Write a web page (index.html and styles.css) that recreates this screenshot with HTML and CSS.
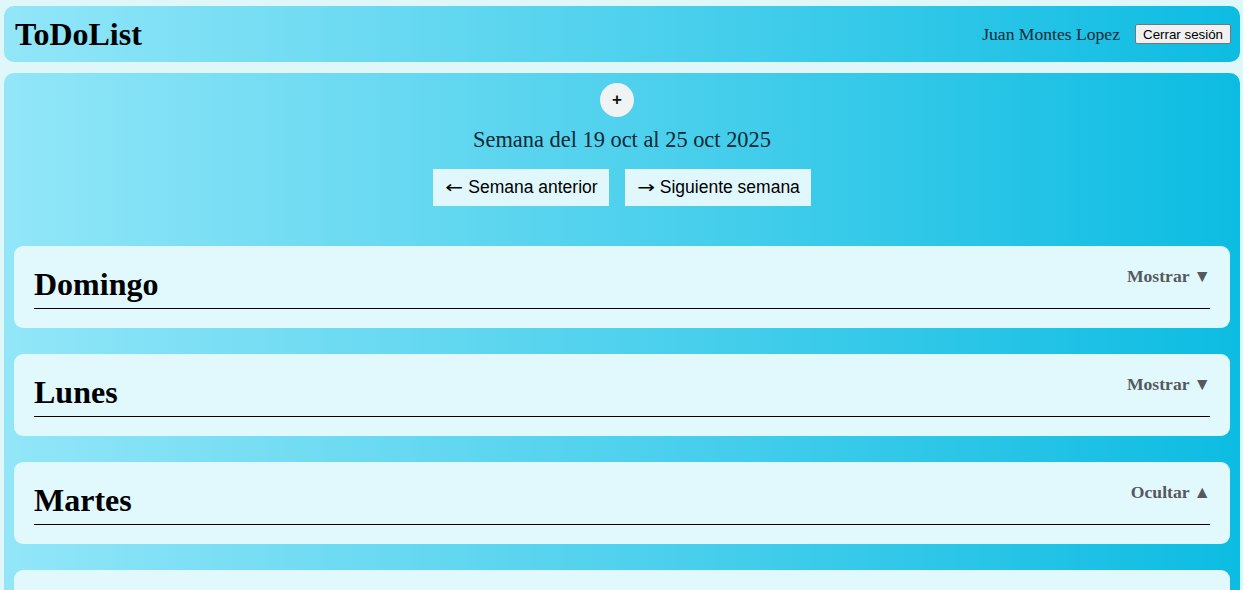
FILE: index.html
```html
<!DOCTYPE html>
<html lang="es">
<head>
<meta charset="utf-8">
<title>ToDoList</title>
<link rel="stylesheet" href="styles.css">
</head>
<body>
<header class="topbar">
  <h1 class="brand">ToDoList</h1>
  <div class="user">
    <span class="user-name">Juan Montes Lopez</span>
    <button class="logout">Cerrar sesión</button>
  </div>
</header>
<main class="board">
  <div class="week-controls">
    <button class="add-btn">+</button>
    <div class="week-label">Semana del 19 oct al 25 oct 2025</div>
    <div class="week-nav">
      <button class="nav-btn"><span class="arrow">←</span> Semana anterior</button>
      <button class="nav-btn"><span class="arrow">→</span> Siguiente semana</button>
    </div>
  </div>
  <section class="day">
    <div class="day-head"><h2 class="day-title">Domingo</h2><span class="toggle">Mostrar ▼</span></div>
  </section>
  <section class="day">
    <div class="day-head"><h2 class="day-title">Lunes</h2><span class="toggle">Mostrar ▼</span></div>
  </section>
  <section class="day">
    <div class="day-head"><h2 class="day-title">Martes</h2><span class="toggle">Ocultar ▲</span></div>
  </section>
  <section class="day">
    <div class="day-head"><h2 class="day-title">Miércoles</h2><span class="toggle">Mostrar ▼</span></div>
  </section>
  <section class="day">
    <div class="day-head"><h2 class="day-title">Jueves</h2><span class="toggle">Mostrar ▼</span></div>
  </section>
</main>
</body>
</html>
```
FILE: styles.css
```css
* { box-sizing: border-box; }
html, body { margin: 0; }
body {
  background: #e0f7fa;
  padding: 6px 3px 0 4px;
  font-family: "Liberation Serif", "Times New Roman", serif;
  color: #000;
}
.topbar {
  display: flex;
  align-items: center;
  justify-content: space-between;
  padding: 9px 9px 9px 11px;
  border-radius: 10px;
  background: linear-gradient(to right, #92e6f8, #0dbce2);
  height: 56px;
}
.brand {
  margin: 0;
  font-size: 32px;
  font-weight: bold;
  line-height: 37px;
}
.user {
  display: flex;
  align-items: center;
  gap: 15px;
}
.user-name {
  font-size: 17.6px;
  color: #102a36;
}
.logout {
  font-family: "Liberation Sans", Arial, sans-serif;
  font-size: 13.33px;
  padding: 1px 7px;
  height: 20px;
  background: #f0f0f0;
  border: 1px solid #767676;
  border-radius: 2px;
  color: #000;
}
.board {
  margin-top: 11px;
  border-radius: 10px;
  background: linear-gradient(to right, #92e6f8, #0dbce2);
  padding: 10px 10px 20px;
}
.week-controls {
  display: flex;
  flex-direction: column;
  align-items: center;
}
.add-btn {
  width: 34px;
  height: 34px;
  margin-right: 10px;
  border-radius: 50%;
  border: none;
  background: #f0f3f4;
  font-family: "Liberation Sans", Arial, sans-serif;
  font-size: 17px;
  font-weight: bold;
  padding: 0;
  color: #111;
}
.week-label {
  margin-top: 10px;
  font-size: 22.4px;
  line-height: 26px;
  color: #0d2a36;
}
.week-nav {
  margin-top: 16px;
  display: flex;
  gap: 16px;
}
.nav-btn {
  font-family: "Liberation Sans", Arial, sans-serif;
  font-size: 17.5px;
  height: 37px;
  padding: 0 11px 0 12px;
  border: none;
  background: #e0f8fc;
  color: #000;
}
.arrow {
  font-family: "DejaVu Sans", sans-serif;
  font-size: 17px;
  display: inline-block;
  transform: scaleX(1.25);
  margin: 0 2px;
}
.day {
  margin-top: 40px;
  background: #e1f8fd;
  border-radius: 9px;
  padding: 20px 20px 19px;
}
.day + .day { margin-top: 26px; }
.day-head {
  display: flex;
  justify-content: space-between;
  align-items: flex-start;
  border-bottom: 1px solid #000;
  padding-bottom: 6px;
}
.day-title {
  margin: 0;
  font-size: 32px;
  line-height: 36px;
  font-weight: bold;
}
.toggle {
  font-size: 17.6px;
  font-weight: bold;
  color: #56595c;
  line-height: 20px;
  margin-right: -1px;
}
```
